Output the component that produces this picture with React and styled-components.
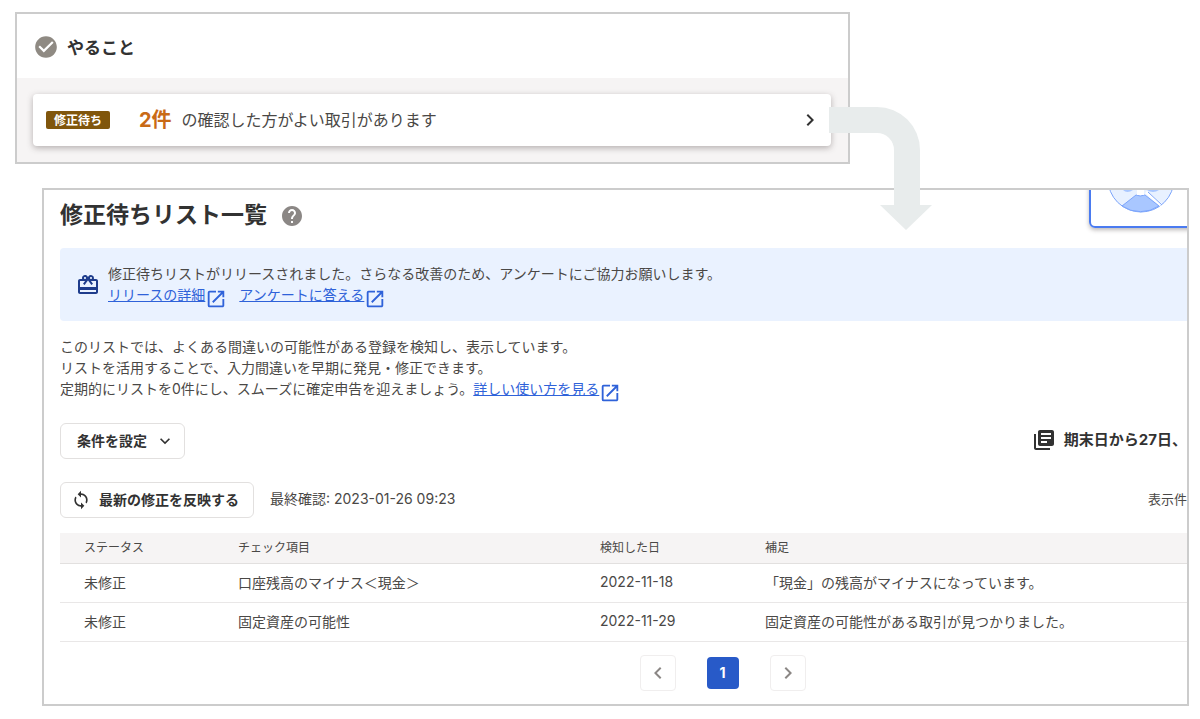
import React from "react";
import styled, { createGlobalStyle } from "styled-components";
import {
  MdCheckCircle,
  MdChevronLeft,
  MdChevronRight,
  MdExpandMore,
  MdHelp,
  MdLibraryBooks,
  MdOpenInNew,
  MdRedeem,
  MdSync,
} from "react-icons/md";

const rows = [
  {
    id: 1,
    status: "未修正",
    item: "口座残高のマイナス＜現金＞",
    date: "2022-11-18",
    note: "「現金」の残高がマイナスになっています。",
  },
  {
    id: 2,
    status: "未修正",
    item: "固定資産の可能性",
    date: "2022-11-29",
    note: "固定資産の可能性がある取引が見つかりました。",
  },
];

const ExternalLink = ({ children }) => (
  <Link href="#">
    <LinkText>{children}</LinkText>
    <MdOpenInNew size={22} />
  </Link>
);

const FlowArrow = () => (
  <ArrowSvg width="104" height="124" viewBox="0 0 104 124" aria-hidden="true">
    <path
      d="M0 0H48A43 43 0 0 1 91 43V98H103L77 123L51 98H65V43A17 17 0 0 0 48 26H0Z"
      fill="#e8ecec"
    />
  </ArrowSvg>
);

const TodoPanel = () => (
  <Todo>
    <TodoHeader>
      <MdCheckCircle size={26} color="#8f8a83" />
      <TodoTitle>やること</TodoTitle>
    </TodoHeader>
    <TodoBody>
      <TodoCard type="button">
        <Badge>修正待ち</Badge>
        <Count>2件</Count>
        <TodoText>の確認した方がよい取引があります</TodoText>
        <MdChevronRight size={24} />
      </TodoCard>
    </TodoBody>
    <FlowArrow />
  </Todo>
);

const ChartThumbnail = () => (
  <Thumbnail>
    <ChartSvg width="64" height="24" viewBox="0 0 64 24" aria-hidden="true">
      <circle cx="32" cy="-13" r="33" fill="#e8f1ff" stroke="#7ba4fb" />
      <path d="M14 -2Q18 2 24 -2ZM38 -2Q44 2 50 -2Z" fill="#a9c7ff" />
      <path d="M37 0L52 13" stroke="#ffffff" strokeWidth="3" />
      <path d="M39 0L53 13" stroke="#7ba4fb" />
      <path
        d="M13 14L27 3Q31 5 36 3L50 14A33 33 0 0 1 13 14Z"
        fill="#a9c7ff"
        stroke="#7ba4fb"
      />
      <rect x="28" y="-2" width="7" height="5" fill="#ffffff" />
    </ChartSvg>
  </Thumbnail>
);

const App = () => {
  return (
    <Page>
      <GlobalStyle />
      <TodoPanel />
      <ListPanel>
        <ChartThumbnail />
        <TitleRow>
          <Title>修正待ちリスト一覧</Title>
          <MdHelp size={24} color="#8b8785" />
        </TitleRow>
        <Notice>
          <MdRedeem size={24} color="#1e3c8c" />
          <NoticeBody>
            <NoticeText>
              修正待ちリストがリリースされました。さらなる改善のため、アンケートにご協力お願いします。
            </NoticeText>
            <NoticeLinks>
              <ExternalLink>リリースの詳細</ExternalLink>
              <ExternalLink>アンケートに答える</ExternalLink>
            </NoticeLinks>
          </NoticeBody>
        </Notice>
        <Description>
          このリストでは、よくある間違いの可能性がある登録を検知し、表示しています。
          <br />
          リストを活用することで、入力間違いを早期に発見・修正できます。
          <br />
          定期的にリストを0件にし、スムーズに確定申告を迎えましょう。
          <ExternalLink>詳しい使い方を見る</ExternalLink>
        </Description>
        <Toolbar>
          <FilterButton type="button">
            <ButtonLabel>条件を設定</ButtonLabel>
            <MdExpandMore size={20} />
          </FilterButton>
          <Period>
            <MdLibraryBooks size={24} />
            <ButtonLabel>期末日から27日、</ButtonLabel>
          </Period>
        </Toolbar>
        <Toolbar>
          <RefreshGroup>
            <RefreshButton type="button">
              <MdSync size={20} />
              <ButtonLabel>最新の修正を反映する</ButtonLabel>
            </RefreshButton>
            <LastChecked>最終確認: 2023-01-26 09:23</LastChecked>
          </RefreshGroup>
          <PageSize>表示件</PageSize>
        </Toolbar>
        <Table>
          <thead>
            <tr>
              <Th $width="154px">ステータス</Th>
              <Th $width="362px">チェック項目</Th>
              <Th $width="165px">検知した日</Th>
              <Th>補足</Th>
            </tr>
          </thead>
          <tbody>
            {rows.map((row) => {
              return (
                <tr key={row.id}>
                  <Td>{row.status}</Td>
                  <Td>{row.item}</Td>
                  <Td>{row.date}</Td>
                  <Td>{row.note}</Td>
                </tr>
              );
            })}
          </tbody>
        </Table>
        <Pagination>
          <PageArrow type="button" aria-label="前へ">
            <MdChevronLeft size={24} />
          </PageArrow>
          <PageNumber type="button">1</PageNumber>
          <PageArrow type="button" aria-label="次へ">
            <MdChevronRight size={24} />
          </PageArrow>
        </Pagination>
      </ListPanel>
    </Page>
  );
};

const GlobalStyle = createGlobalStyle`
  * {
    box-sizing: border-box;
  }

  body {
    margin: 0;
    background-color: #ffffff;
    color: #4a4846;
    font-family: Inter, "Noto Sans CJK JP", sans-serif;
    font-size: 14px;
  }

  button {
    font-family: inherit;
    cursor: pointer;
  }

  svg {
    flex-shrink: 0;
  }
`;

const Page = styled.main`
  padding: 12px 11px 12px 15px;
`;

const Todo = styled.section`
  position: relative;
  margin-right: 339px;
  border: 2px solid #cccccc;
`;

const TodoHeader = styled.header`
  display: flex;
  align-items: center;
  gap: 8px;
  height: 64px;
  padding: 2px 16px 0;
`;

const TodoTitle = styled.h2`
  margin: 0;
  padding-bottom: 2px;
  font-size: 17px;
  font-weight: 600;
  color: #323232;
`;

const TodoBody = styled.div`
  padding: 16px 17px 16px 16px;
  background-color: #f6f4f4;
`;

const TodoCard = styled.button`
  display: flex;
  align-items: center;
  width: 100%;
  height: 52px;
  padding: 0 9px 0 13px;
  border: none;
  border-radius: 4px;
  background-color: #ffffff;
  box-shadow: 0 2px 6px rgba(60, 50, 50, 0.35);
  color: #323232;
`;

const Badge = styled.span`
  width: 64px;
  margin-right: 29px;
  padding-top: 2px;
  border-radius: 2px;
  background-color: #80560c;
  font-size: 12px;
  font-weight: 700;
  line-height: 16px;
  text-align: center;
  color: #ffffff;
`;

const Count = styled.span`
  margin-right: 10px;
  padding-bottom: 3px;
  font-size: 20px;
  font-weight: 700;
  color: #c96a16;
`;

const TodoText = styled.span`
  flex: 1;
  padding-bottom: 3px;
  font-size: 16px;
  text-align: left;
  color: #4a4846;
`;

const ArrowSvg = styled.svg`
  position: absolute;
  top: 93px;
  right: -85px;
  z-index: 1;
`;

const ListPanel = styled.section`
  position: relative;
  margin: 24px 0 0 27px;
  padding: 10px 0 13px 16px;
  border: 2px solid #cccccc;
  overflow: hidden;
`;

const Thumbnail = styled.div`
  position: absolute;
  top: -8px;
  right: -8px;
  display: flex;
  width: 106px;
  height: 46px;
  padding: 8px 18px;
  border: 2px solid #4a7bf0;
  border-radius: 6px;
  box-shadow: 0 2px 4px rgba(60, 50, 50, 0.35);
`;

const ChartSvg = styled.svg`
  overflow: visible;
`;

const TitleRow = styled.div`
  display: flex;
  align-items: center;
  gap: 13px;
  height: 32px;
`;

const Title = styled.h1`
  margin: 0;
  padding-bottom: 2px;
  font-size: 23px;
  font-weight: 700;
  line-height: 32px;
  color: #323232;
`;

const Notice = styled.div`
  display: flex;
  align-items: center;
  gap: 8px;
  height: 73px;
  margin-top: 16px;
  padding: 0 16px;
  border-radius: 4px 0 0 4px;
  background-color: #eaf2ff;
`;

const NoticeBody = styled.div`
  padding-bottom: 2px;
  line-height: 21px;
`;

const NoticeText = styled.p`
  margin: 0;
`;

const NoticeLinks = styled.div`
  display: flex;
  gap: 12px;
`;

const Link = styled.a`
  display: inline-flex;
  height: 21px;
  color: #2f62d9;
  text-decoration: none;
  vertical-align: top;

  svg {
    margin-top: 4px;
  }
`;

const LinkText = styled.span`
  text-decoration: underline;
`;

const Description = styled.p`
  margin: 15px 0 0;
  padding-bottom: 1px;
  line-height: 21px;
`;

const Toolbar = styled.div`
  display: flex;
  align-items: center;
  justify-content: space-between;
  margin-top: 23px;
`;

const OutlineButton = styled.button`
  display: flex;
  align-items: center;
  gap: 8px;
  height: 36px;
  border: 1px solid #e2e0df;
  border-radius: 6px;
  background-color: #ffffff;
  font-size: 14px;
  font-weight: 700;
  color: #323232;
`;

const FilterButton = styled(OutlineButton)`
  padding: 0 9px 0 16px;
`;

const RefreshButton = styled(OutlineButton)`
  padding: 0 14px 0 10px;
`;

const ButtonLabel = styled.span`
  padding-bottom: 3px;
`;

const Period = styled.div`
  display: flex;
  align-items: center;
  gap: 8px;
  padding-bottom: 3px;
  font-size: 15px;
  font-weight: 700;
  white-space: nowrap;
  color: #323232;
`;

const RefreshGroup = styled.div`
  display: flex;
  align-items: center;
  gap: 16px;
`;

const LastChecked = styled.span`
  padding-bottom: 4px;
  font-size: 14px;
`;

const PageSize = styled.span`
  padding-bottom: 3px;
  font-size: 13px;
`;

const Table = styled.table`
  width: 100%;
  margin-top: 15px;
  border-collapse: collapse;
  table-layout: fixed;
`;

const Th = styled.th`
  width: ${(props) => props.$width || "auto"};
  height: 30px;
  padding: 0 0 2px 24px;
  border-bottom: 1px solid #e2e0df;
  background-color: #f6f4f4;
  font-size: 12px;
  font-weight: 400;
  text-align: left;
`;

const Td = styled.td`
  height: 39px;
  padding: 0 0 2px 24px;
  border-bottom: 1px solid #e9e7e7;
`;

const Pagination = styled.nav`
  display: flex;
  align-items: center;
  justify-content: center;
  gap: 31px;
  margin-top: 13px;
  padding-left: 198px;
`;

const PageArrow = styled.button`
  display: flex;
  align-items: center;
  justify-content: center;
  width: 36px;
  height: 36px;
  padding: 0;
  border: 1px solid #f0eeee;
  border-radius: 4px;
  background-color: #ffffff;
  color: #8b8785;
`;

const PageNumber = styled.button`
  width: 32px;
  height: 32px;
  padding: 0;
  border: none;
  border-radius: 4px;
  background-color: #285ac8;
  font-size: 14px;
  font-weight: 700;
  color: #ffffff;
`;

export default App;
